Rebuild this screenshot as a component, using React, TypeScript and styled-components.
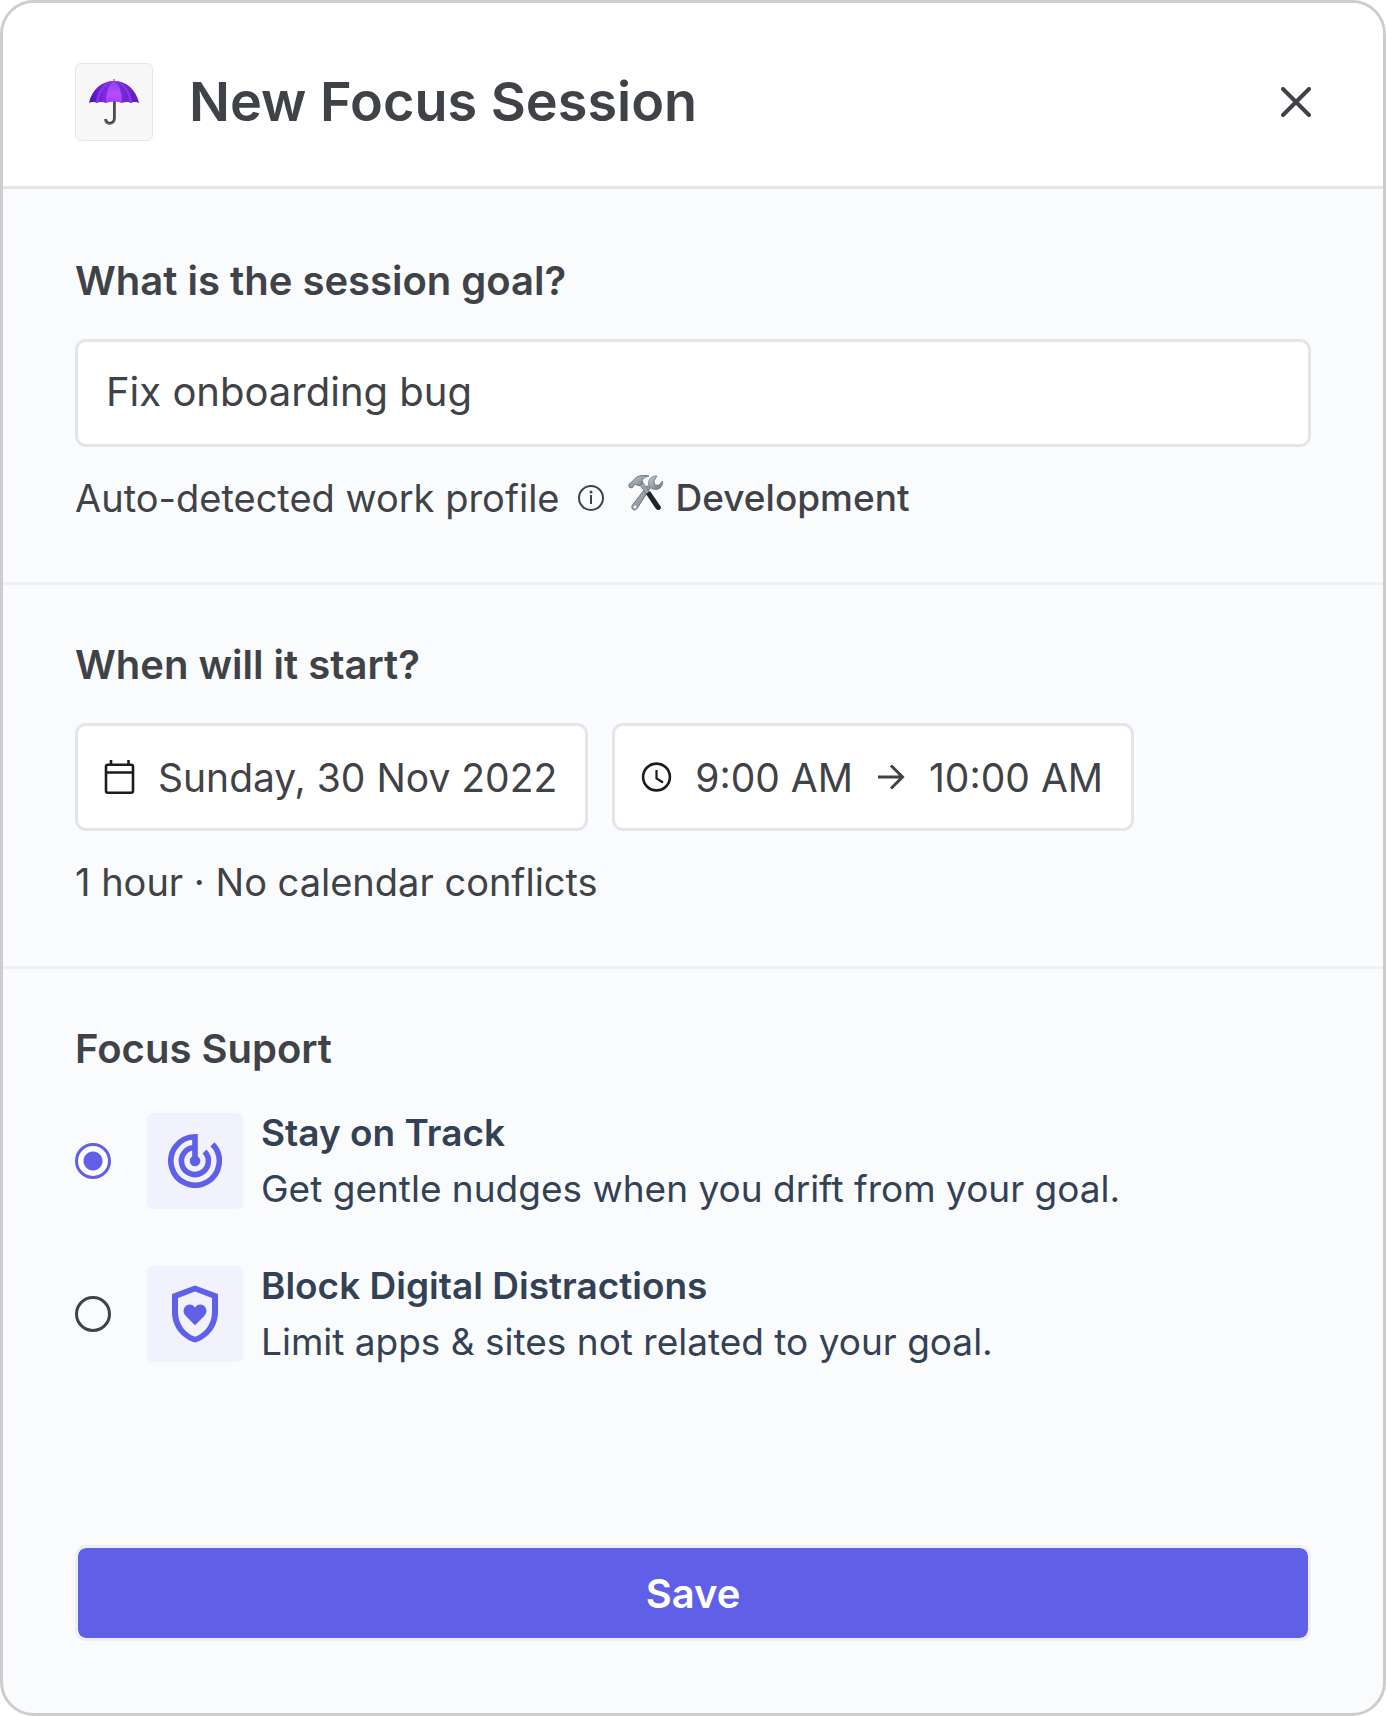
import { useState, type ReactNode } from "react";
import styled, { createGlobalStyle } from "styled-components";

const ink = "#3f4247";
const slate = "#334155";
const accent = "#605fe8";
const line = "#e4e5e9";
const paper = "#fafbfd";

const GlobalStyle = createGlobalStyle`
  *, *::before, *::after { box-sizing: border-box; }
  body { margin: 0; background: #ffffff; }
  body, button, input { font-family: Inter, "Liberation Sans", sans-serif; }
  h1, h2, p { margin: 0; }
`;

const Dialog = styled.main`
  display: flex;
  flex-direction: column;
  min-height: 100vh;
  border: 3px solid #cdcdcd;
  border-radius: 34px;
  background: ${paper};
  color: ${ink};
  overflow: hidden;
`;

const Header = styled.header`
  display: flex;
  align-items: center;
  gap: 36px;
  padding: 60px 72px 45px;
  border-bottom: 3px solid ${line};
  background: #ffffff;
`;

const Badge = styled.span`
  display: flex;
  align-items: center;
  justify-content: center;
  width: 78px;
  height: 78px;
  border: 1px solid ${line};
  border-radius: 6px;
  background: #f7f7f7;
`;

const Title = styled.h1`
  flex: 1;
  font-size: 54px;
  line-height: 60px;
  font-weight: 600;
`;

const CloseButton = styled.button`
  display: flex;
  padding: 0;
  border: 0;
  background: none;
  color: ${ink};
  cursor: pointer;
`;

const Section = styled.section<{ $first?: boolean; $last?: boolean }>`
  display: flex;
  flex-direction: column;
  align-items: stretch;
  padding: ${(p) => (p.$first ? 72 : 60)}px 72px ${(p) => (p.$last ? 0 : 61)}px;
  border-bottom: ${(p) => (p.$last ? 0 : 3)}px solid #eff0f2;
`;

const Heading = styled.h2`
  font-size: 40px;
  line-height: 40px;
  font-weight: 600;
`;

const Field = styled.input`
  width: 100%;
  height: 108px;
  margin-top: 38px;
  padding: 0 28px 4px;
  border: 3px solid ${line};
  border-radius: 11px;
  background: #ffffff;
  color: ${ink};
  font-size: 40px;
`;

const Pickers = styled.div`
  display: flex;
  flex-wrap: wrap;
  gap: 24px;
  margin-top: 38px;
`;

const Picker = styled.button`
  display: flex;
  align-items: center;
  gap: 20px;
  height: 108px;
  padding: 0 28px 0 24px;
  border: 3px solid ${line};
  border-radius: 11px;
  background: #ffffff;
  color: ${ink};
  font-size: 39px;
  cursor: pointer;
`;

const Note = styled.p`
  display: flex;
  align-items: center;
  margin-top: 28px;
  font-size: 38px;
  line-height: 46px;
`;

const InfoButton = styled(CloseButton)`
  margin: 0 24px 0 18px;
`;

const Profile = styled.strong`
  display: flex;
  align-items: baseline;
  gap: 12px;
  font-size: 37px;
  font-weight: 500;
`;

const Options = styled.div`
  display: flex;
  flex-direction: column;
  gap: 41px;
  margin-top: 36px;
`;

const Option = styled.label`
  display: flex;
  align-items: center;
  color: ${slate};
  cursor: pointer;
`;

const Radio = styled.input`
  appearance: none;
  flex: none;
  width: 36px;
  height: 36px;
  margin: 0 36px 0 0;
  border: 3px solid ${ink};
  border-radius: 50%;

  &:checked {
    border-color: ${accent};
    background: radial-gradient(circle, ${accent} 9px, #ffffff 10px);
  }
`;

const Tile = styled.span`
  display: flex;
  flex: none;
  align-items: center;
  justify-content: center;
  width: 96px;
  height: 96px;
  margin-right: 18px;
  border-radius: 6px;
  background: #f2f1fe;
  color: ${accent};
`;

const OptionText = styled.span`
  display: flex;
  flex-direction: column;
`;

const OptionTitle = styled.span`
  font-size: 37px;
  line-height: 56px;
  font-weight: 600;
`;

const OptionDetail = styled.span`
  font-size: 37px;
  line-height: 56px;
`;

const Footer = styled.footer`
  display: flex;
  margin-top: auto;
  padding: 72px;
`;

const SaveButton = styled.button`
  flex: 1;
  height: 96px;
  border: 3px solid #eeeff4;
  border-radius: 11px;
  background: ${accent};
  background-clip: padding-box;
  color: #ffffff;
  font-size: 40px;
  font-weight: 600;
  cursor: pointer;
`;

const Umbrella = () => (
  <svg width="52" height="48" viewBox="0 0 52 48" aria-hidden="true">
    <defs>
      <linearGradient id="canopy" x1="0" x2="1" y1="0" y2="0">
        <stop offset="0" stopColor="#4a12b4" />
        <stop offset="0.3" stopColor="#7a2be0" />
        <stop offset="0.7" stopColor="#6f2ad6" />
        <stop offset="1" stopColor="#5a1cc0" />
      </linearGradient>
      <linearGradient id="panel" x1="0" x2="0" y1="0" y2="1">
        <stop offset="0" stopColor="#8b3ff0" />
        <stop offset="0.6" stopColor="#b64dff" />
        <stop offset="1" stopColor="#a23df5" />
      </linearGradient>
    </defs>
    <path d="M26 1v4" stroke="#8b8b90" strokeWidth="1.6" />
    <path d="M26.500 22v18c0 7-9 7-9 1" fill="none" stroke="#6d6d72" strokeWidth="3" />
    <path d="M26 22v18c0 6-7.500 6-8 1" fill="none" stroke="#35353a" strokeWidth="1.2" />
    <path d="M1 25C4 11 14 3 26 3s22 8 25 22c-2-1.500-6-1.500-8 0-2-1.500-6-1.500-9 0-4-2-12-2-16 0-3-1.500-7-1.500-9 0-2-1.500-6-1.500-8 0z" fill="url(#canopy)" />
    <path d="M18 25C18 14 21 5 26 3c5 2 8 11 8 22-4-2-12-2-16 0z" fill="url(#panel)" />
    <path d="M8 24C9 14 15 6 23 3.500 15 9 11 16 11 24zM44 24C43 14 37 6 29 3.500 37 9 41 16 41 24z" fill="#a13bf3" opacity="0.7" />
  </svg>
);

const Tools = () => (
  <svg width="36" height="36" viewBox="0 1 36 36" aria-hidden="true">
    <defs>
      <linearGradient id="steel" x1="0" x2="1" y1="0" y2="1">
        <stop offset="0" stopColor="#c3ccd4" />
        <stop offset="1" stopColor="#69737e" />
      </linearGradient>
    </defs>
    <path d="M23 13 9 34.500c-2.500 3.500-7 0-4.500-3.500L19 12z" fill="url(#steel)" stroke="#6a5a62" strokeWidth="0.8" />
    <circle cx="7" cy="33" r="1.500" fill={paper} />
    <path d="M29 2c-6-1-10 5-8 10 2 4 9 5 12 1 1.500-2 2-4 1.500-6L31 11h-4l-1-4z" fill="url(#steel)" stroke="#66717c" strokeWidth="0.7" />
    <path d="m11 10 3-3 8 12-3 2z" fill="#9aa3ac" stroke="#59636e" strokeWidth="0.6" />
    <path d="m18 20 4-3 11 16c0 3-3 4-5 2z" fill="#222326" />
    <path d="M1 10 5 7c2-4 8-7 16-5-5 1-7 3-7 7l-3 3-4-2-3 4-3-1z" fill="url(#steel)" stroke="#59636e" strokeWidth="0.8" />
  </svg>
);

const CloseIcon = () => (
  <svg width="30" height="30" viewBox="0 0 30 30" fill="none" stroke="currentColor" strokeWidth="4" strokeLinecap="round" aria-hidden="true">
    <path d="m2 2 26 26M28 2 2 28" />
  </svg>
);

const InfoIcon = () => (
  <svg width="26" height="26" viewBox="0 0 26 26" fill="none" stroke="currentColor" strokeWidth="2" aria-hidden="true">
    <circle cx="13" cy="13" r="12" />
    <path d="M13 10v9" />
    <circle cx="13" cy="7" r="1.500" fill="currentColor" stroke="none" />
  </svg>
);

const CalendarIcon = () => (
  <svg width="36" height="36" viewBox="0 0 36 36" fill="none" stroke="#1c1b1f" strokeWidth="2.600" aria-hidden="true">
    <rect x="4" y="5.700" width="27" height="28" rx="2" />
    <path d="M4 13.500h27M9 1v4M26.500 1v4" />
  </svg>
);

const ClockIcon = () => (
  <svg width="36" height="36" viewBox="0 0 36 36" fill="none" stroke="#1c1b1f" strokeWidth="2.600" aria-hidden="true">
    <circle cx="17.500" cy="18" r="13.400" />
    <path d="M17.500 11v8.500l6.500 4" strokeWidth="2.200" />
  </svg>
);

const ArrowIcon = () => (
  <svg width="36" height="36" viewBox="0 0 36 36" fill="none" stroke="currentColor" strokeWidth="3" aria-hidden="true">
    <path d="M5 18h24M18 6.500 29.500 18 18 29.500" />
  </svg>
);

const TrackIcon = () => (
  <svg width="54" height="54" viewBox="0 0 54 54" fill="none" stroke="currentColor" strokeWidth="5.600" aria-hidden="true">
    <path d="M27 27V2.800a24.200 24.200 0 1 0 17.500 7.400" />
    <path d="M27 13.500a13.500 13.500 0 1 0 9.500 4" />
    <circle cx="27" cy="27" r="5.300" fill="currentColor" stroke="none" />
  </svg>
);

const ShieldIcon = () => (
  <svg width="54" height="58" viewBox="0 0 54 58" fill="currentColor" aria-hidden="true">
    <path fillRule="evenodd" d="M27 .5 50 9v18c0 14.500-9.500 26.500-23 30.500C13.500 53.500 4 41.500 4 27V9zM27 6.600 10 13v14c0 11.500 7 21.500 17 24.700C37 48.500 44 38.500 44 27V13z" />
    <path d="M27 40.300 18.300 31.600C15.500 28.500 15 26 16 23.500c2-5 8.500-5.500 11-.8 2.500-4.700 9-4.200 11 .8 1 2.500.5 5-2.300 8.100z" />
  </svg>
);

interface SupportOption {
  id: string;
  title: string;
  detail: string;
  icon: ReactNode;
}

const supportOptions: SupportOption[] = [
  {
    id: "track",
    title: "Stay on Track",
    detail: "Get gentle nudges when you drift from your goal.",
    icon: <TrackIcon />,
  },
  {
    id: "block",
    title: "Block Digital Distractions",
    detail: "Limit apps & sites not related to your goal.",
    icon: <ShieldIcon />,
  },
];

export default function App() {
  const [goal, setGoal] = useState("Fix onboarding bug");
  const [support, setSupport] = useState("track");

  return (
    <>
      <GlobalStyle />
      <Dialog>
        <Header>
          <Badge>
            <Umbrella />
          </Badge>
          <Title>New Focus Session</Title>
          <CloseButton type="button" aria-label="Close">
            <CloseIcon />
          </CloseButton>
        </Header>

        <Section $first>
          <Heading>
            <label htmlFor="goal">What is the session goal?</label>
          </Heading>
          <Field id="goal" type="text" value={goal} onChange={(e) => setGoal(e.target.value)} />
          <Note as="div">
            Auto-detected work profile
            <InfoButton type="button" aria-label="About work profiles">
              <InfoIcon />
            </InfoButton>
            <Profile>
              <Tools />
              Development
            </Profile>
          </Note>
        </Section>

        <Section aria-labelledby="start">
          <Heading id="start">When will it start?</Heading>
          <Pickers>
            <Picker type="button">
              <CalendarIcon />
              Sunday, 30 Nov 2022
            </Picker>
            <Picker type="button">
              <ClockIcon />
              <span>9:00 AM</span>
              <ArrowIcon />
              <span>10:00 AM</span>
            </Picker>
          </Pickers>
          <Note>1 hour · No calendar conflicts</Note>
        </Section>

        <Section $last>
          <Heading id="support">Focus Suport</Heading>
          <Options role="radiogroup" aria-labelledby="support">
            {supportOptions.map((option) => (
              <Option key={option.id}>
                <Radio
                  type="radio"
                  name="support"
                  value={option.id}
                  checked={support === option.id}
                  onChange={() => setSupport(option.id)}
                />
                <Tile>{option.icon}</Tile>
                <OptionText>
                  <OptionTitle>{option.title}</OptionTitle>
                  <OptionDetail>{option.detail}</OptionDetail>
                </OptionText>
              </Option>
            ))}
          </Options>
        </Section>

        <Footer>
          <SaveButton type="button">Save</SaveButton>
        </Footer>
      </Dialog>
    </>
  );
}
